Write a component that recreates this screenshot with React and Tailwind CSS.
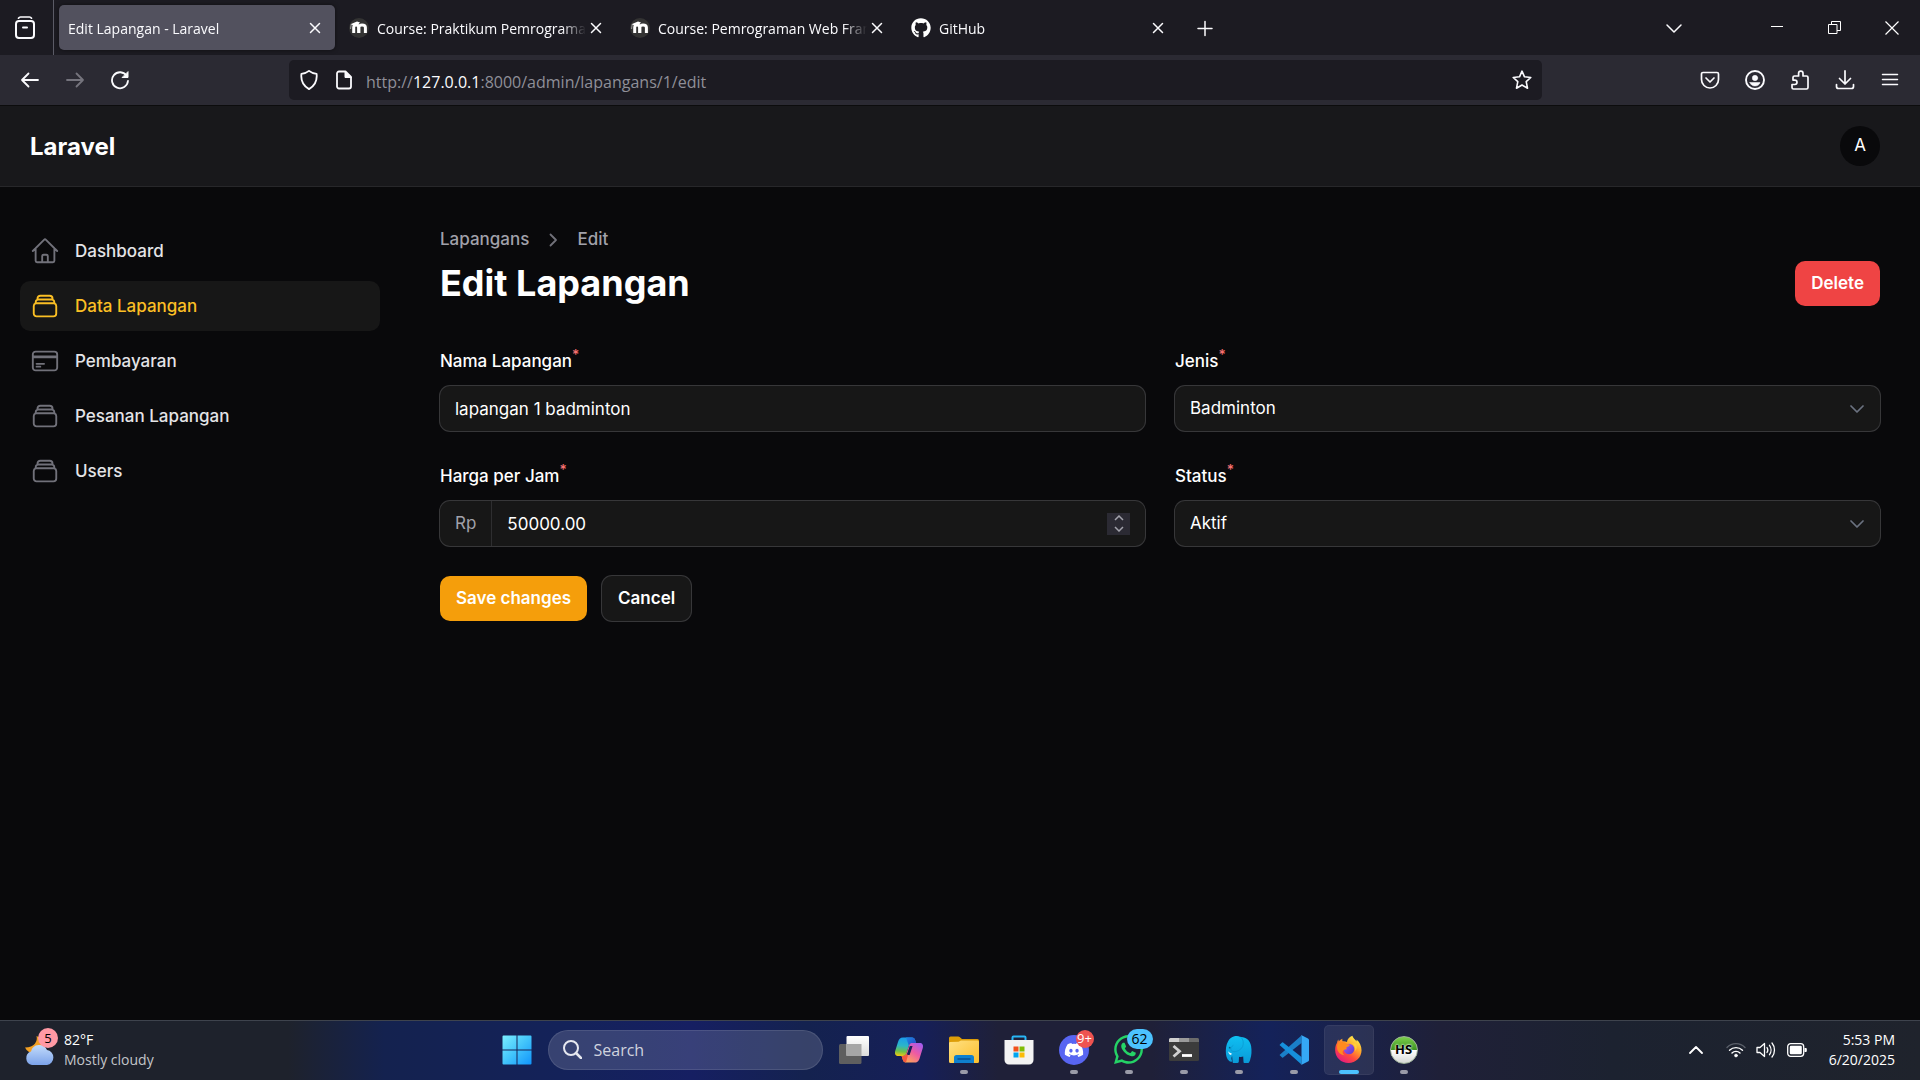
import React from "react";
import { FaGithub, FaDiscord, FaWhatsapp } from "react-icons/fa";
import { HiOutlineHome, HiOutlineRectangleStack, HiOutlineCreditCard } from "react-icons/hi2";

/* ---------- shared bits ---------- */

function Line({ size = 20, sw = 1.5, children, className = "" }) {
  return (
    <svg
      width={size}
      height={size}
      viewBox="0 0 20 20"
      fill="none"
      stroke="currentColor"
      strokeWidth={sw}
      strokeLinecap="round"
      strokeLinejoin="round"
      aria-hidden="true"
      className={className}
    >
      {children}
    </svg>
  );
}

function BarButton({ label, className = "", children }) {
  return (
    <button type="button" aria-label={label} className={`flex h-10 w-[45px] shrink-0 items-center justify-center ${className}`}>
      {children}
    </button>
  );
}

/* ---------- browser ---------- */

function MoodleIcon() {
  return (
    <svg width="20" height="20" viewBox="0 0 20 20" aria-hidden="true">
      <circle cx="10" cy="10" r="10" fill="#333" />
      <path d="M1.5 6.2 8 3.6 11 4.4 8.2 7.4 4 7.2Z" fill="#fff" />
      <path d="M2.2 6.5 1.6 11" stroke="#bbb" strokeWidth="0.8" />
      <path
        d="M4.7 15V9.4c0-1.5.9-2.4 2.4-2.4s2.5.9 2.5 2.4V15M9.9 15V9.4c0-1.5 1.2-2.4 3.1-2.4s3.4.9 3.4 2.4V15"
        fill="none"
        stroke="#fff"
        strokeWidth="3"
      />
    </svg>
  );
}

const tabs = [
  { title: "Edit Lapangan - Laravel", active: true },
  { title: "Course: Praktikum Pemrograma", icon: "moodle" },
  { title: "Course: Pemrograman Web Fram", icon: "moodle" },
  { title: "GitHub", icon: "github" },
];

function Tab({ title, icon, active }) {
  return (
    <div
      className={`flex h-[45px] w-[276px] items-center gap-2 rounded-[5px] pr-[10px] pl-[9px] ${
        active ? "bg-[#52515e] shadow-[0_0_4px_rgba(0,0,0,0.5)]" : ""
      }`}
    >
      {icon === "moodle" && <MoodleIcon />}
      {icon === "github" && <FaGithub size={20} color="#fff" />}
      <a
        href="#tab"
        className="min-w-0 flex-1 overflow-hidden pt-px text-[14px] whitespace-nowrap [mask-image:linear-gradient(to_left,transparent,black_24px)]"
      >
        {title}
      </a>
      <button type="button" aria-label={`Close ${title}`} className="-ml-2 flex h-5 w-5 items-center justify-center">
        <Line size={20} sw={1.5}>
          <path d="M5.500 5.500l9 9M14.500 5.500l-9 9" />
        </Line>
      </button>
    </div>
  );
}

function TabStrip() {
  return (
    <div className="flex h-[55px] items-center bg-[#1c1b22]">
      <button type="button" aria-label="Firefox View" className="flex h-full w-[54px] items-center justify-center border-r border-[#5b5b66] pr-[3px]">
        <svg width="20" height="24" viewBox="0 0 20 24" fill="none" stroke="#fbfbfe" strokeWidth="2" strokeLinecap="round" aria-hidden="true">
          <path d="M3.500 2.200C4 1.400 4.600 1 5.500 1h9c.9 0 1.500.4 2 1.200" strokeWidth="1.700" />
          <rect x="1" y="5" width="18" height="17" rx="3" />
          <path d="M8 11.500h4" />
        </svg>
      </button>
      <div className="ml-[5px] flex gap-[5px]">
        {tabs.map((t) => (
          <Tab key={t.title} {...t} />
        ))}
      </div>
      <button type="button" aria-label="New tab" className="ml-[7px] flex h-10 w-10 items-center justify-center">
        <Line size={20}>
          <path d="M10 3.500v14M3 10.500h14" />
        </Line>
      </button>
      <div className="ml-auto flex">
        <button type="button" aria-label="List all tabs" className="mr-[55px] flex h-10 w-10 items-center justify-center">
          <Line size={20}>
            <path d="M3 7l7 7 7-7" />
          </Line>
        </button>
        <button type="button" aria-label="Minimize" className="flex h-10 w-[57px] items-center justify-center">
          <svg width="13" height="13" viewBox="0 0 13 13" aria-hidden="true">
            <path d="M0 5.500h12" stroke="#fff" />
          </svg>
        </button>
        <button type="button" aria-label="Restore" className="flex h-10 w-[57px] items-center justify-center">
          <svg width="13" height="13" viewBox="0 0 13 13" fill="none" stroke="#fff" aria-hidden="true">
            <path d="M.5 3.500h8.500v9H.5zM3.500 3.500V.5h9v9H9" />
          </svg>
        </button>
        <button type="button" aria-label="Close window" className="flex h-10 w-[57px] items-center justify-center">
          <svg width="14" height="14" viewBox="0 0 14 14" stroke="#fff" strokeWidth="1.200" aria-hidden="true">
            <path d="M.5.5l13 13M13.500.5l-13 13" />
          </svg>
        </button>
      </div>
    </div>
  );
}

function Toolbar() {
  return (
    <div className="flex h-[51px] items-center border-b border-[#0c0c0d] bg-[#2b2a33] pr-2 pl-[7px]">
      <BarButton label="Back">
        <Line sw={1.8}>
          <path d="M18 10H2M8.500 3.500L2 10l6.500 6.500" />
        </Line>
      </BarButton>
      <BarButton label="Forward" className="text-[#75747d]">
        <Line sw={1.8}>
          <path d="M2 10h16M11.500 3.500L18 10l-6.500 6.500" />
        </Line>
      </BarButton>
      <BarButton label="Reload">
        <Line sw={1.8}>
          <path d="M16.800 6A8 8 0 1 0 18 10.800" />
          <path d="M18 2v5.500h-5.500z" fill="currentColor" strokeWidth="1" />
        </Line>
      </BarButton>
      <div className="ml-[147px] flex h-10 min-w-0 flex-1 items-center rounded-[5px] bg-[#1c1b22] pl-[10px]">
        <button type="button" aria-label="Tracking protection" className="flex h-8 w-5 items-center justify-center">
          <Line sw={1.8}>
            <path d="M10 .9c2 1.700 4.500 2.600 7.600 2.900.7 6.300-1.700 11.900-7.600 15.300C4.100 15.700 1.700 10.100 2.400 3.800 5.500 3.500 8 2.600 10 .9z" />
          </Line>
        </button>
        <button type="button" aria-label="Site information" className="ml-[15px] flex h-8 w-5 items-center justify-center">
          <Line sw={1.8}>
            <path d="M5 1.500h6.500l5.500 5.500v9.500a2 2 0 0 1-2 2H5a2 2 0 0 1-2-2v-13a2 2 0 0 1 2-2z" />
            <path d="M11 1.500V7.500h6z" fill="currentColor" strokeWidth="1" />
          </Line>
        </button>
        <div
          role="textbox"
          aria-label="Address"
          contentEditable
          suppressContentEditableWarning
          spellCheck={false}
          className="ml-3 flex-1 truncate pt-[3px] text-[16px] text-[#8f8f98] outline-none"
        >
          http://<span className="text-[#fbfbfe]">127.0.0.1</span>:8000/admin/lapangans/1/edit
        </div>
        <button type="button" aria-label="Bookmark this page" className="flex h-8 w-10 items-center justify-center">
          <Line sw={1.6}>
            <path d="M10 1.200l2.500 5.600 6.300.7-4.600 4.200 1.300 6.500L10 15l-5.500 3.200 1.300-6.500L1.200 7.500l6.300-.7z" />
          </Line>
        </button>
      </div>
      <div className="ml-[145px] flex">
        <BarButton label="Save to Pocket">
          <Line sw={1.7}>
            <path d="M3 2.500h14a1.500 1.500 0 0 1 1.500 1.500v5.500a8.500 8.500 0 0 1-17 0V4A1.500 1.500 0 0 1 3 2.500z" />
            <path d="M6 8l4 4 4-4" />
          </Line>
        </BarButton>
        <BarButton label="Account">
          <Line sw={1.9}>
            <circle cx="10" cy="10" r="9" />
            <circle cx="10" cy="8" r="2.700" fill="currentColor" strokeWidth="0.500" />
            <path d="M5 12.500h10c-.5 2.200-2.500 3.500-5 3.500s-4.500-1.300-5-3.500z" fill="currentColor" strokeWidth="0.500" />
          </Line>
        </BarButton>
        <BarButton label="Extensions">
          <Line sw={1.7}>
            <path d="M3.500 19h13a1.500 1.500 0 0 0 1.500-1.500V7.500A1.500 1.500 0 0 0 16.500 6H13V3.300a2.200 2.200 0 0 0-4.400 0V6H4.500A1.500 1.500 0 0 0 3 7.500v2.600h1.800a2.200 2.200 0 0 1 0 4.400H2v3a1.500 1.500 0 0 0 1.500 1.500z" />
          </Line>
        </BarButton>
        <BarButton label="Downloads">
          <Line sw={1.7}>
            <path d="M10 .9v13M4.500 8.500l5.500 5.500 5.500-5.500M1.500 14.500v2a2 2 0 0 0 2 2h13a2 2 0 0 0 2-2v-2" />
          </Line>
        </BarButton>
        <BarButton label="Open application menu">
          <Line sw={1.5}>
            <path d="M2.500 4.500h15M2.500 9.500h15M2.500 14.500h15" />
          </Line>
        </BarButton>
      </div>
    </div>
  );
}

/* ---------- admin panel ---------- */

const nav = [
  { label: "Dashboard", Icon: HiOutlineHome },
  { label: "Data Lapangan", Icon: HiOutlineRectangleStack, active: true },
  { label: "Pembayaran", Icon: HiOutlineCreditCard },
  { label: "Pesanan Lapangan", Icon: HiOutlineRectangleStack },
  { label: "Users", Icon: HiOutlineRectangleStack },
];

function Sidebar() {
  return (
    <nav className="w-[400px] shrink-0 px-5 pt-[39px] pb-10">
      <ul className="flex flex-col gap-[5px]">
        {nav.map(({ label, Icon, active }) => (
          <li key={label}>
            <a
              href="#nav"
              aria-current={active ? "page" : undefined}
              className={`flex h-[50px] items-center gap-[15px] rounded-[10px] px-[10px] font-medium ${
                active ? "bg-[#171717] text-[#fbbf24]" : "text-[#e4e4e7]"
              }`}
            >
              <Icon size={30} className={active ? "text-[#fbbf24]" : "text-[#71717a]"} />
              <span className="pt-[2px]">{label}</span>
            </a>
          </li>
        ))}
      </ul>
    </nav>
  );
}

function Field({ id, label, children }) {
  return (
    <div className="flex flex-col gap-[10px]">
      <label htmlFor={id} className="h-[30px] leading-[31px] font-medium text-white">
        {label}
        <sup className="text-[14px] text-[#f87171]">*</sup>
      </label>
      <div className="relative flex h-[45px] items-center rounded-[10px] bg-[#171717] ring-1 ring-[#373739]">{children}</div>
    </div>
  );
}

function SelectField({ id, label, options }) {
  return (
    <Field id={id} label={label}>
      <select id={id} className="h-full w-full appearance-none rounded-[10px] bg-transparent px-[15px] pt-px text-white outline-none">
        {options.map((o) => (
          <option key={o}>{o}</option>
        ))}
      </select>
      <svg className="pointer-events-none absolute right-[16px]" width="14" height="8" viewBox="0 0 14 8" fill="none" stroke="#6b7280" strokeWidth="1.700" strokeLinecap="round" strokeLinejoin="round" aria-hidden="true">
        <path d="M1 1l6 6 6-6" />
      </svg>
    </Field>
  );
}

function Panel() {
  return (
    <div className="flex flex-1 flex-col bg-[#09090b] font-[Inter,sans-serif] text-[17px] text-white">
      <header className="flex h-[81px] items-center justify-between border-b border-[#27272a] bg-[#18181b] pr-10 pl-[30px]">
        <a href="#home" className="pt-px text-[24px] font-bold">
          Laravel
        </a>
        <button type="button" aria-label="User menu" className="h-10 w-10 rounded-full bg-[#09090b] text-[17px]">
          A
        </button>
      </header>
      <div className="flex flex-1">
        <Sidebar />
        <main className="min-w-0 flex-1 px-10 py-10">
          <div className="flex items-end justify-between">
            <div>
              <nav aria-label="Breadcrumb" className="mb-[9px] flex h-[25px] items-center gap-4 font-medium text-[#a1a1aa]">
                <a href="#lapangans">Lapangans</a>
                <svg width="16" height="16" viewBox="0 0 16 16" fill="none" stroke="#71717a" strokeWidth="1.800" strokeLinecap="round" strokeLinejoin="round" aria-hidden="true">
                  <path d="M5.500 2.500L11 8l-5.500 5.500" />
                </svg>
                <a href="#edit">Edit</a>
              </nav>
              <h1 className="text-[36px] leading-[45px] font-bold">Edit Lapangan</h1>
            </div>
            <button type="button" className="h-[45px] rounded-[10px] bg-[#ef4444] px-4 pt-px font-semibold">
              Delete
            </button>
          </div>
          <form className="mt-10" onSubmit={(e) => e.preventDefault()}>
            <div className="grid grid-cols-2 gap-[30px]">
              <Field id="nama" label="Nama Lapangan">
                <input id="nama" type="text" defaultValue="lapangan 1 badminton" className="h-full w-full bg-transparent px-[15px] outline-none" />
              </Field>
              <SelectField id="jenis" label="Jenis" options={["Badminton", "Futsal"]} />
              <Field id="harga" label="Harga per Jam">
                <span className="flex h-full items-center border-r border-[#2e2e30] px-[15px] text-[#a1a1aa]">Rp</span>
                <input
                  id="harga"
                  type="number"
                  defaultValue="50000.00"
                  className="h-full min-w-0 flex-1 [appearance:textfield] bg-transparent pl-[15px] outline-none [&::-webkit-inner-spin-button]:appearance-none"
                />
                <div className="mr-[15px] flex h-[22px] w-[23px] flex-col bg-[#2b2a33] text-[#a3a3ac]">
                  <button type="button" aria-label="Increase" className="flex flex-1 items-center justify-center">
                    <svg width="10" height="6" viewBox="0 0 10 6" fill="none" stroke="currentColor" strokeWidth="1.500" aria-hidden="true">
                      <path d="M1 5l4-4 4 4" />
                    </svg>
                  </button>
                  <button type="button" aria-label="Decrease" className="flex flex-1 items-center justify-center">
                    <svg width="10" height="6" viewBox="0 0 10 6" fill="none" stroke="currentColor" strokeWidth="1.500" aria-hidden="true">
                      <path d="M1 1l4 4 4-4" />
                    </svg>
                  </button>
                </div>
              </Field>
              <SelectField id="status" label="Status" options={["Aktif", "Nonaktif"]} />
            </div>
            <div className="mt-[30px] flex gap-[15px] font-semibold">
              <button type="submit" className="h-[45px] rounded-[10px] bg-[#f59e0b] px-4 pt-px">
                Save changes
              </button>
              <button type="button" className="h-[45px] rounded-[10px] bg-[#171717] px-4 pt-px ring-1 ring-[#373739]">
                Cancel
              </button>
            </div>
          </form>
        </main>
      </div>
    </div>
  );
}

/* ---------- taskbar ---------- */

function StartIcon() {
  return (
    <svg width="30" height="30" viewBox="0 0 30 30" aria-hidden="true">
      <defs>
        <linearGradient id="start" x1="0" y1="0" x2="30" y2="30" gradientUnits="userSpaceOnUse">
          <stop stopColor="#7df0ff" />
          <stop offset="0.500" stopColor="#42c4fb" />
          <stop offset="1" stopColor="#0f93fb" />
        </linearGradient>
      </defs>
      <path d="M1.500.5H14.500v14H.5v-13a1 1 0 0 1 1-1zM15.500.5h13a1 1 0 0 1 1 1v13h-14zM.5 15.500h14v14h-13a1 1 0 0 1-1-1zM15.500 15.500h14v13a1 1 0 0 1-1 1h-13z" fill="url(#start)" />
    </svg>
  );
}

function TaskViewIcon() {
  return (
    <svg width="30" height="28" viewBox="0 0 30 28" aria-hidden="true">
      <defs>
        <linearGradient id="tv" x1="0" y1="0" x2="0" y2="1">
          <stop stopColor="#fff" />
          <stop offset="1" stopColor="#dcdcdc" />
        </linearGradient>
      </defs>
      <rect x="0" y="8" width="22.500" height="20" rx="1.500" fill="#5f5f5f" />
      <rect x="7.500" y="0" width="22.500" height="20" rx="1" fill="url(#tv)" />
      <path d="M7.500 8h15v12h-15z" fill="#a6a6a6" />
    </svg>
  );
}

function CopilotIcon() {
  return (
    <svg width="30" height="28" viewBox="0 0 30 28" aria-hidden="true">
      <defs>
        <linearGradient id="cp1" x1="8" y1="1" x2="6" y2="20" gradientUnits="userSpaceOnUse">
          <stop stopColor="#1a9bef" />
          <stop offset="0.450" stopColor="#2bb5c9" />
          <stop offset="0.750" stopColor="#6cc04a" />
          <stop offset="1" stopColor="#f2c811" />
        </linearGradient>
        <linearGradient id="cp2" x1="26" y1="7" x2="12" y2="27" gradientUnits="userSpaceOnUse">
          <stop stopColor="#a35bf0" />
          <stop offset="0.450" stopColor="#ee5aa3" />
          <stop offset="1" stopColor="#ffb04f" />
        </linearGradient>
        <linearGradient id="cp3" x1="12" y1="1" x2="20" y2="9" gradientUnits="userSpaceOnUse">
          <stop stopColor="#1f8ae8" />
          <stop offset="1" stopColor="#2450c8" />
        </linearGradient>
      </defs>
      <path d="M13 1.500h5c1.800 0 2.700 1 3.200 2.800L22 7h-3.500c-2 0-3 .8-3.600 2.800L12.500 17c-.7 2-1.500 3-3.700 3H4.500C1.500 20 .5 18 1.200 15L4 6C5 3 6 1.500 9 1.500z" fill="url(#cp1)" />
      <path d="M12 1.500h6c1.800 0 2.700 1 3.200 2.800L22 7h-3.500c-2 0-3 .8-3.600 2.800z" fill="url(#cp3)" />
      <path d="M17 26.500h-5c-1.800 0-2.700-1-3.200-2.800L7.600 20h1.200c2.200 0 3-1 3.700-3l2.800-8c.6-1.500 1.500-2 3.200-2h7c3 0 4 2 3.300 5L26 21c-1 4-2.500 5.500-5 5.500z" fill="url(#cp2)" />
      <path d="M15.800 10h2.800l-3 9h-3z" fill="#15205a" />
      <path d="M7.600 20h1.200c2.200 0 3-1 3.700-2l1.500 1-2 7.500c-1.800 0-2.700-1-3.200-2.800z" fill="#f4593f" />
    </svg>
  );
}

function ExplorerIcon() {
  return (
    <svg width="30" height="27" viewBox="0 0 30 27" aria-hidden="true">
      <defs>
        <linearGradient id="ex" x1="0" y1="0" x2="1" y2="1">
          <stop stopColor="#ffe083" />
          <stop offset="1" stopColor="#fcbf2c" />
        </linearGradient>
      </defs>
      <path d="M0 2a1.500 1.500 0 0 1 1.500-1.500h7.800a2 2 0 0 1 1.300.5L13 3h15.500A1.500 1.500 0 0 1 30 4.500V12H0z" fill="#dd9d08" />
      <path d="M0 7a1.500 1.500 0 0 1 1-1l8.500-.3L12 4.500h16.500A1.500 1.500 0 0 1 30 6v19.500a1.500 1.500 0 0 1-1.500 1.500h-27A1.500 1.500 0 0 1 0 25.500z" fill="url(#ex)" />
      <path d="M5 27v-5.500A2.500 2.500 0 0 1 7.500 19h15a2.500 2.500 0 0 1 2.500 2.500V27z" fill="#0f80cf" />
      <path d="M9 23h12" stroke="#0a4f93" strokeWidth="1.500" strokeLinecap="round" />
    </svg>
  );
}

function StoreIcon() {
  return (
    <svg width="30" height="30" viewBox="0 0 30 30" aria-hidden="true">
      <path d="M8.500 6V2.500a1 1 0 0 1 1-1h11a1 1 0 0 1 1 1V6" fill="none" stroke="#28b6f6" strokeWidth="2" />
      <path d="M.5 5h29v20a4.500 4.500 0 0 1-4.500 4.500H5A4.500 4.500 0 0 1 .5 25z" fill="#f3f3f3" />
      <path d="M9.500 11.500h5v5h-5z" fill="#f1511b" />
      <path d="M15.500 11.500h5v5h-5z" fill="#80bc06" />
      <path d="M9.500 17.500h5v5h-5z" fill="#00a4ef" />
      <path d="M15.500 17.500h5v5h-5z" fill="#fbbc09" />
    </svg>
  );
}

function DiscordIcon() {
  return (
    <span className="flex h-[30px] w-[30px] items-center justify-center rounded-full bg-[#5865f2]">
      <FaDiscord size={20} color="#fff" />
    </span>
  );
}

function TerminalIcon() {
  return (
    <svg width="30" height="23" viewBox="0 0 30 23" aria-hidden="true">
      <rect width="30" height="23" rx="1.500" fill="#3c3c3c" />
      <path d="M0 4V1.500A1.500 1.500 0 0 1 1.500 0H10v4z" fill="#cfcfcf" />
      <path d="M10 0h10v4H10z" fill="#9a9a9a" />
      <path d="M20 0h8.500A1.500 1.500 0 0 1 30 1.500V4H20z" fill="#6b6b6b" />
      <path d="M4.500 8l6 5.200-6 5.300" fill="none" stroke="#d0d0d0" strokeWidth="2.800" />
      <path d="M13 17.500h10" stroke="#fff" strokeWidth="2.800" />
    </svg>
  );
}

function ElephantIcon() {
  return (
    <svg width="28" height="29" viewBox="0 0 30 30" aria-hidden="true">
      <defs>
        <linearGradient id="el" x1="0" y1="0" x2="0" y2="1">
          <stop stopColor="#0fc0f2" />
          <stop offset="1" stopColor="#0a9ad8" />
        </linearGradient>
      </defs>
      <path d="M10 .8c2-.6 4.500-.6 6.500.7 6-.3 10.500 3.500 11.500 10 .8 5 .4 10.500-.8 13.500-.2 1.500-1.200 4.500-2.200 4.500h-4c-1 0-1.200-1-1.200-2l-.3-5c-1.500.5-3 .5-4.500.2l-.2 5c0 1.200-.5 1.800-1.500 1.800H9.500c-.9 0-1.400-.5-1.400-1.500l-.5-6.300c-.6 1.700-1 3.300-.3 4.700.5 1 .2 1.900-.8 1.700C3.500 27.500 1.500 24 1 19.500.6 15 1 10 3.500 6 5 3.200 7 1.500 10 .8z" fill="url(#el)" />
      <path d="M9 10.500c-2 1-3.500 3.200-2.500 5.500 2.500 2 6 1.500 9-.5 3-1.600 4.500-5 4-9-.3-2-1.500-4-3-5" fill="none" stroke="#0a94cc" strokeWidth="0.700" />
      <circle cx="5" cy="13" r="0.900" fill="#056489" />
      <path d="M3.500 16.500c.8 1.600 1.800 2.200 3.500 2.200l-.3 2.300c-1.900-.4-3.300-2.200-3.200-4.500z" fill="#e8f8ff" />
    </svg>
  );
}

function VsCodeIcon() {
  return (
    <svg width="30" height="30" viewBox="0 0 30 30" aria-hidden="true">
      <path d="M22.500.5L.5 20l2.300 2.300a1 1 0 0 0 1.300.1L22.500 8z" fill="#1a7fc8" />
      <path d="M.5 10l2.300-2.300a1 1 0 0 1 1.300-.1L22.500 22v7.500z" fill="#1690dc" />
      <path d="M21.500.3c.4-.2.700-.2 1.100 0L29 3.400a1.800 1.800 0 0 1 1 1.600v20a1.800 1.800 0 0 1-1 1.600l-6.400 3.100c-.4.2-.7.200-1.100 0 .6.100 1-.4 1-1.200v-27c0-.8-.4-1.300-1-1.200z" fill="#35a8f5" />
    </svg>
  );
}

function FirefoxIcon() {
  return (
    <svg width="29" height="29" viewBox="0 0 30 30" aria-hidden="true">
      <defs>
        <linearGradient id="ff1" x1="24" y1="2" x2="6" y2="28" gradientUnits="userSpaceOnUse">
          <stop stopColor="#fff44f" />
          <stop offset="0.350" stopColor="#ffa52a" />
          <stop offset="0.650" stopColor="#ff4a3d" />
          <stop offset="1" stopColor="#e31587" />
        </linearGradient>
        <linearGradient id="ff2" x1="0" y1="0" x2="1" y2="1">
          <stop stopColor="#a259f7" />
          <stop offset="1" stopColor="#5a38c9" />
        </linearGradient>
      </defs>
      <path d="M19 .8c.5 2.200 3 3.800 4.300 5.800.2-.8 0-1.500-.1-2 3.300 2.400 5.300 6.700 5.300 11.200C28.500 23.200 22.500 29 15 29S1.200 23.200 1.200 15.500c0-3.500 1-6.200 2-7.500.1-1 .8-2.800 1.300-3.300.1.700.3 1.500.5 2C6 5.500 7.500 4.500 8.700 4c-.2.900-.2 1.700.1 2.500 2-.3 3.400.1 4.600.8C13.600 4.500 16 2 19 .8z" fill="url(#ff1)" />
      <circle cx="15.500" cy="14.500" r="5.500" fill="url(#ff2)" />
      <path d="M4.500 8c3-1.500 7-1 9 1.500.8 0 2.500 0 2.800.8-.2 1.200-1.700 1.500-3.200 2.200-.5.800-.2 1.700.2 2.200-2.300-.2-4 1-4.300 2.300-.3 1.500.5 3 2 4-4.500-.5-7.500-3.500-7.800-7.500C3 11.500 3.400 9.500 4.500 8z" fill="#ff8a1f" />
      <path d="M18 8.500c3 1.500 4.500 4.500 4 8 1.800-2.200 2-5 .8-7.500z" fill="#ffcf3d" />
    </svg>
  );
}

function HeidiIcon() {
  return (
    <span className="flex h-[28px] w-[28px] items-center justify-center rounded-full border border-[#9fb39a] bg-[linear-gradient(180deg,#7ccf4c_0%,#3c9420_50%,#ffffff_50%,#d5d8d5_100%)] font-['Open_Sans',sans-serif] text-[13px] leading-none font-bold text-black [text-shadow:0_0_2px_#fff,0_0_2px_#fff]">
      HS
    </span>
  );
}

const apps = [
  { name: "Task View", Icon: TaskViewIcon },
  { name: "Copilot", Icon: CopilotIcon },
  { name: "File Explorer", Icon: ExplorerIcon, open: true },
  { name: "Microsoft Store", Icon: StoreIcon },
  { name: "Discord", Icon: DiscordIcon, open: true, badge: "9+", red: true },
  { name: "WhatsApp", Icon: () => <FaWhatsapp size={33} color="#25d366" />, open: true, badge: "62" },
  { name: "Terminal", Icon: TerminalIcon, open: true },
  { name: "Database", Icon: ElephantIcon, open: true },
  { name: "Visual Studio Code", Icon: VsCodeIcon, open: true },
  { name: "Firefox", Icon: FirefoxIcon, open: true, active: true },
  { name: "HeidiSQL", Icon: HeidiIcon, open: true },
];

function AppButton({ name, Icon, open, active, badge, red }) {
  return (
    <button
      type="button"
      aria-label={name}
      className={`relative flex h-[50px] w-[50px] items-center justify-center rounded-[5px] ${
        active ? "bg-white/8 ring-1 ring-white/5 ring-inset" : ""
      }`}
    >
      <Icon />
      {badge && (
        <span
          className={`absolute flex items-center justify-center rounded-full leading-none ${
            red
              ? "top-[5px] right-[5px] h-[18px] w-[18px] bg-[#ef5350] text-[13px] text-white"
              : "top-[4px] right-[1px] h-[20px] w-[26px] bg-[#4cc2ff] text-[14px] text-black"
          }`}
        >
          {badge}
        </span>
      )}
      {open && (
        <span className={`absolute bottom-[1px] h-[4px] rounded-full ${active ? "w-5 bg-[#4cc2ff]" : "w-2 bg-[#9a9ba8]"}`} />
      )}
    </button>
  );
}

function Taskbar() {
  return (
    <footer className="grid h-[60px] grid-cols-[1fr_auto_1fr] items-center border-t border-[#3e434d] bg-[linear-gradient(90deg,#1e222c_0%,#1e222c_15%,#14224f_20%,#14225a_30%,#161f62_36%,#14224f_42%,#161f58_48%,#1f2038_52%,#1f2038_60%,#14225a_66%,#1f2038_75%,#1c2230_84%,#1f232c_100%)] pb-[2px]">
      <button type="button" aria-label="Weather" className="flex items-center gap-[9px] pl-6 text-left text-[14px] leading-5">
        <span className="relative flex h-10 w-[31px] items-center">
          <svg width="31" height="36" viewBox="0 0 31 36" aria-hidden="true">
            <defs>
              <linearGradient id="cl" x1="0" y1="0" x2="0" y2="1">
                <stop stopColor="#c3dcfb" />
                <stop offset="1" stopColor="#7ca3ea" />
              </linearGradient>
            </defs>
            <path d="M12.500 4c1.500 5-2 11.500-11.500 11.500 2 4 6 6 10 5.500 6-1 9-6 8-10.500C18 7 15.500 5 12.500 4z" fill="#f2a024" />
            <path d="M8 33a7 7 0 0 1-1-13.500 8.500 8.500 0 0 1 16-1.500 7.600 7.600 0 0 1 0 15z" fill="url(#cl)" />
          </svg>
          <span className="absolute -top-[2px] -right-[3px] flex h-5 w-5 items-center justify-center rounded-full bg-[#ff99a4] text-[13px] text-black">5</span>
        </span>
        <span>
          <span className="block text-white">82°F</span>
          <span className="block text-[#c3c5c9]">Mostly cloudy</span>
        </span>
      </button>

      <div className="flex items-center gap-[5px]">
        <button type="button" aria-label="Start" className="flex h-[50px] w-[50px] items-center justify-center">
          <StartIcon />
        </button>
        <label className="mx-px flex h-10 w-[275px] items-center gap-3 rounded-full bg-white/15 pl-[15px] ring-1 ring-white/10 ring-inset">
          <svg width="19" height="19" viewBox="0 0 19 19" fill="none" stroke="#e6e8f0" strokeWidth="2" strokeLinecap="round" aria-hidden="true">
            <circle cx="8" cy="8" r="7" />
            <path d="M13 13l5 5" strokeWidth="2.500" />
          </svg>
          <input type="search" aria-label="Search" placeholder="Search" className="w-40 bg-transparent text-[16px] outline-none placeholder:text-[#d0d3de]" />
        </label>
        {apps.map((a) => (
          <AppButton key={a.name} {...a} />
        ))}
      </div>

      <div className="flex items-center justify-end pr-[25px]">
        <button type="button" aria-label="Show hidden icons" className="mr-[20px] flex h-10 w-5 items-center justify-center">
          <svg width="14" height="8" viewBox="0 0 14 8" fill="none" stroke="#fff" strokeWidth="1.800" strokeLinecap="round" strokeLinejoin="round" aria-hidden="true">
            <path d="M1 7l6-6 6 6" />
          </svg>
        </button>
        <button type="button" aria-label="Network, volume and battery" className="flex items-center gap-[10px]">
          <svg width="20" height="16" viewBox="0 0 20 16" fill="none" stroke="#fff" strokeWidth="1.400" strokeLinecap="round" aria-hidden="true">
            <path d="M1 5.500a12.500 12.500 0 0 1 18 0" stroke="#5a5f69" />
            <path d="M3.500 8.300a9.200 9.200 0 0 1 13 0M6 11a5.700 5.700 0 0 1 8 0" />
            <circle cx="10" cy="13.500" r="1.500" fill="#fff" strokeWidth="0.500" />
          </svg>
          <svg width="21" height="18" viewBox="0 0 21 18" fill="none" stroke="#fff" strokeWidth="1.300" strokeLinecap="round" strokeLinejoin="round" aria-hidden="true">
            <path d="M1 6.500h3L8.500 2.500v13L4 11.500H1zM11 6.500c1 1.500 1 3.500 0 5M13.500 4.300c2 2.700 2 6.700 0 9.400M16 2c3.300 4 3.300 10 0 14" />
          </svg>
          <svg width="20" height="14" viewBox="0 0 20 14" fill="none" aria-hidden="true">
            <rect x="0.700" y="0.700" width="16" height="12.600" rx="3" stroke="#fff" strokeWidth="1.300" />
            <rect x="2.800" y="2.800" width="12" height="8.400" rx="1.200" fill="#fff" />
            <path d="M17.500 5h1.300a1 1 0 0 1 1 1v2a1 1 0 0 1-1 1h-1.300z" fill="#fff" />
          </svg>
        </button>
        <button type="button" aria-label="Clock" className="ml-[22px] text-right text-[14px] leading-5 text-white">
          <span className="block">5:53 PM</span>
          <span className="block">6/20/2025</span>
        </button>
      </div>
    </footer>
  );
}

export default function App() {
  return (
    <div className="flex min-h-screen flex-col bg-[#09090b] font-['Open_Sans','Noto_Sans',sans-serif] text-[#fbfbfe]">
      <TabStrip />
      <Toolbar />
      <Panel />
      <Taskbar />
    </div>
  );
}
